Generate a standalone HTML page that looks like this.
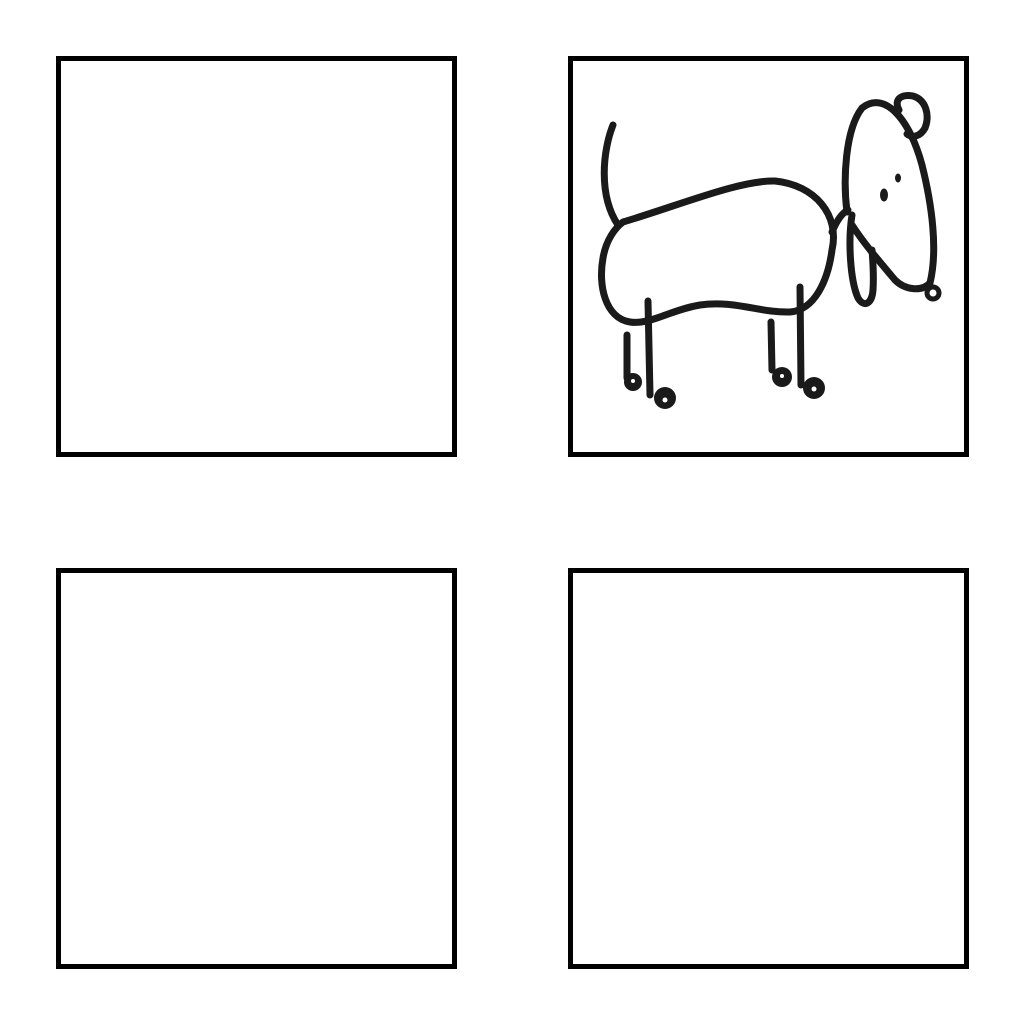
<!DOCTYPE html>
<html><head><style>
html,body{margin:0;padding:0;background:#fff;width:1024px;height:1024px;overflow:hidden}
.b{position:absolute;width:391px;height:391px;border:5px solid #000;background:#fff}
svg{position:absolute;left:0;top:0}
</style></head><body>
<div class="b" style="left:56px;top:56px"></div>
<div class="b" style="left:568px;top:56px"></div>
<div class="b" style="left:56px;top:568px"></div>
<div class="b" style="left:568px;top:568px"></div>
<svg width="1024" height="1024" viewBox="0 0 1024 1024" fill="none" stroke="#1a1a1a" stroke-width="7" stroke-linecap="round" stroke-linejoin="round">
<path d="M613,125 C603,150 598,195 618,225"/>
<path d="M623,222 C680,205 740,180 775,181 C815,185 840,215 832,250 C828,280 815,310 790,312 C760,313 735,300 700,305 C670,310 650,325 630,322 C605,318 598,285 603,258 C606,240 615,228 623,222"/>
<path d="M627,335 L627,378"/>
<path d="M648,301 L650,395"/>
<path d="M771,322 L772,370"/>
<path d="M800,287 L801,385"/>
<g fill="#1a1a1a" stroke="none">
<circle cx="633" cy="382" r="9"/>
<circle cx="665" cy="398" r="11"/>
<circle cx="782" cy="377" r="10"/>
<circle cx="814" cy="388" r="11"/>
</g>
<g fill="#fff" stroke="none">
<circle cx="633" cy="381" r="2"/>
<circle cx="665" cy="400" r="2.5"/>
<circle cx="782" cy="376" r="2"/>
<circle cx="814" cy="389" r="2.5"/>
</g>
<path d="M847,212 C843,180 845,130 862,108 C885,90 910,120 922,165 C932,205 938,250 930,283 C922,292 905,290 895,280 C880,262 865,245 852,225"/>
<path d="M852,215 C848,240 850,280 858,298 C864,308 872,304 873,290 C874,275 873,262 872,250"/>
<path d="M832,232 C837,220 842,213 848,210"/>
<path d="M899,110 C893,98 903,94 913,96 C926,100 930,115 925,128 C920,137 912,138 907,134"/>
<circle cx="933" cy="293" r="6" stroke-width="5"/>
<ellipse cx="898" cy="178" rx="3" ry="4.5" fill="#1a1a1a" stroke="none"/>
<ellipse cx="884" cy="195" rx="4" ry="6.5" fill="#1a1a1a" stroke="none"/>
</svg>
</body></html>
